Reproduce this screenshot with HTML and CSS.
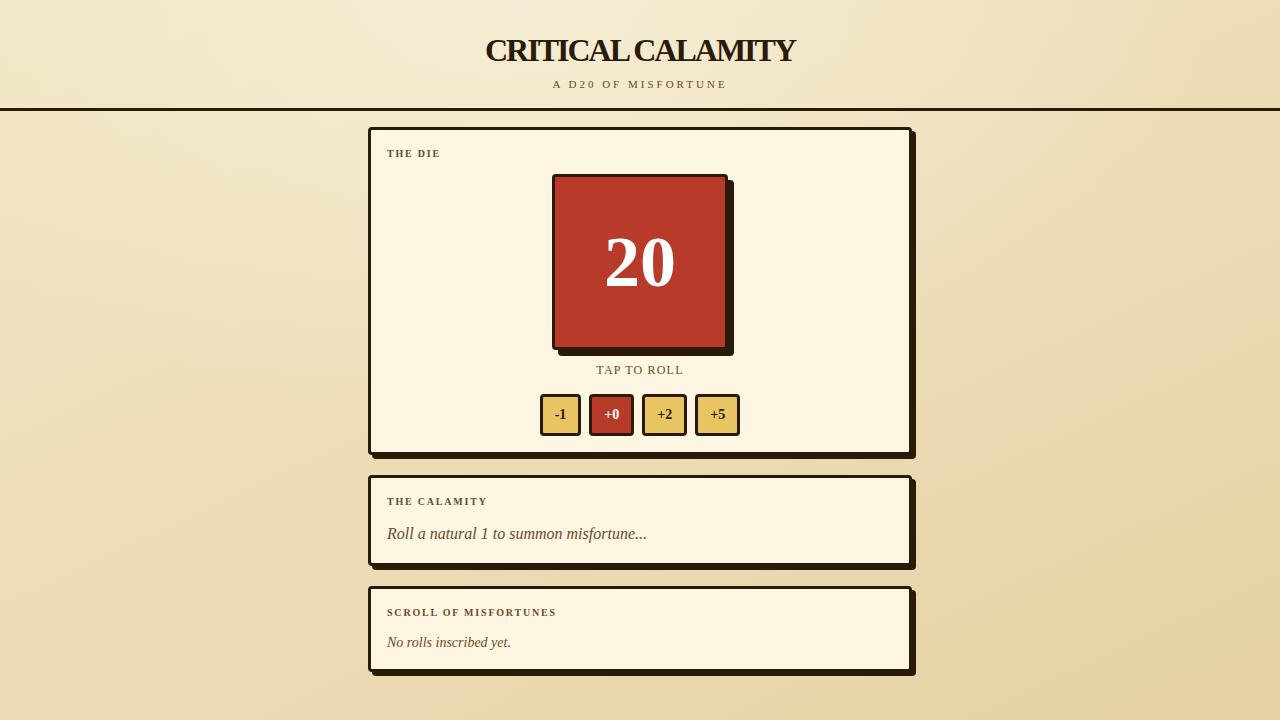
FILE: index.html
```html
<!DOCTYPE html>
<html lang="en">
<head>
<meta charset="utf-8">
<title>Critical Calamity</title>
<link rel="stylesheet" href="styles.css">
</head>
<body>
<header class="site-header">
  <h1 class="title">CRITICAL CALAMITY</h1>
  <p class="subtitle">A D20 OF MISFORTUNE</p>
</header>
<main class="content">
  <section class="card">
    <h2 class="card-label">THE DIE</h2>
    <div class="die-area">
      <button class="die" type="button">20</button>
      <div class="die-hint">TAP TO ROLL</div>
      <div class="mods">
        <button class="mod" type="button">-1</button>
        <button class="mod active" type="button">+0</button>
        <button class="mod" type="button">+2</button>
        <button class="mod" type="button">+5</button>
      </div>
    </div>
  </section>
  <section class="card">
    <h2 class="card-label">THE CALAMITY</h2>
    <p class="calamity">Roll a natural 1 to summon misfortune...</p>
  </section>
  <section class="card">
    <h2 class="card-label">SCROLL OF MISFORTUNES</h2>
    <p class="empty">No rolls inscribed yet.</p>
  </section>
</main>
</body>
</html>
```
FILE: styles.css
```css
* { box-sizing: border-box; }
html, body { min-height: 100%; }
body {
  margin: 0;
  font-family: "Liberation Serif", "Times New Roman", serif;
  color: #2a1a0a;
  background:
    radial-gradient(ellipse 700px 420px at 40% 0%, rgba(246, 238, 214, 0.9), rgba(246, 238, 214, 0) 100%),
    linear-gradient(155deg, #f1e5c4 0%, #ecdcb5 55%, #e4d2a4 100%);
  background-attachment: fixed;
}
.site-header {
  text-align: center;
  padding: 31px 0 17px;
  border-bottom: 3px solid #2a1a0a;
}
.title {
  margin: 0;
  font-size: 32px;
  line-height: 38px;
  font-weight: 700;
  letter-spacing: -2px;
  color: #2a1a0a;
}
.subtitle {
  margin: 8px 0 0;
  font-size: 11px;
  line-height: 14px;
  letter-spacing: 3px;
  color: #6b4a26;
}
.content {
  width: 544px;
  margin: 0 auto;
  padding: 16px 0 40px;
  display: flex;
  flex-direction: column;
  gap: 20px;
}
.card {
  background: #fdf6e3;
  border: 3px solid #2a1a0a;
  border-radius: 4px;
  box-shadow: 4px 4px 0 #2a1a0a;
  padding: 16px;
}
.card-label {
  margin: 0 0 11px;
  padding-top: 1px;
  font-size: 10px;
  line-height: 14px;
  font-weight: 700;
  letter-spacing: 1.8px;
  color: #6b4a26;
}
.die-area {
  display: flex;
  flex-direction: column;
  align-items: center;
  padding-top: 2px;
}
.die {
  width: 176px;
  height: 176px;
  background: #b83a2a;
  border: 3px solid #2a1a0a;
  border-radius: 4px;
  box-shadow: 6px 6px 0 #2a1a0a;
  color: #fff;
  font-family: "Liberation Serif", serif;
  font-size: 72px;
  font-weight: 700;
  padding: 0;
  cursor: pointer;
}
.die-hint {
  margin-top: 13px;
  font-size: 12px;
  line-height: 14px;
  letter-spacing: 1.2px;
  color: #6b4a26;
}
.mods {
  display: flex;
  gap: 8px;
  margin-top: 17px;
}
.mod {
  height: 42px;
  padding: 0 12px;
  background: #e8c462;
  border: 3px solid #2a1a0a;
  border-radius: 4px;
  font-family: "Liberation Serif", serif;
  font-size: 14px;
  font-weight: 700;
  color: #2a1a0a;
  cursor: pointer;
}
.mod.active {
  background: #b83a2a;
  color: #fff;
}
.calamity {
  margin: 0;
  padding-top: 1px;
  font-size: 16px;
  line-height: 26px;
  font-style: italic;
  color: #6b4a26;
}
.empty {
  margin: 0;
  padding-top: 1px;
  font-size: 14px;
  line-height: 21px;
  font-style: italic;
  color: #6b4a26;
}
```
